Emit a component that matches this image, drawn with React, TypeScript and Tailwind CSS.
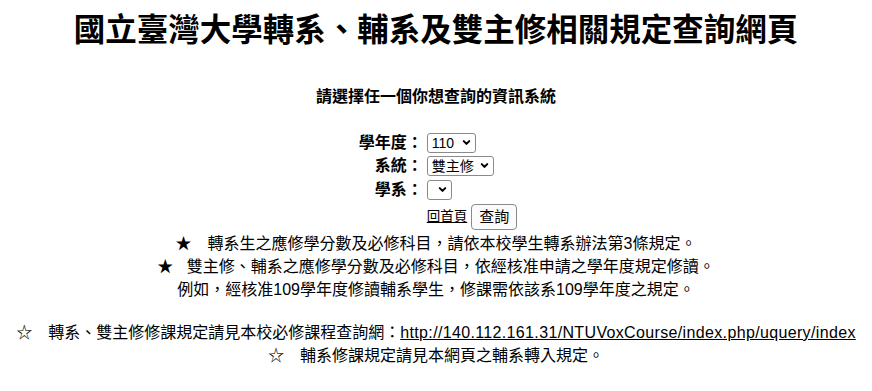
import { ChevronDown } from "lucide-react";

const body = "font-['Liberation_Sans','Noto_Sans_CJK_TC',sans-serif]";

function FakeSelect({ value, options }: { value: string; options: string[] }) {
  return (
    <span className="relative inline-flex align-middle">
      <select
        defaultValue={value}
        className="appearance-none h-[20px] rounded-[3px] border border-[#8a8a8a] bg-white pl-[4px] pr-[19px] text-[14px] leading-[18px] text-black outline-none"
      >
        {options.map((o) => (
          <option key={o} value={o}>
            {o}
          </option>
        ))}
      </select>
      <ChevronDown
        className="pointer-events-none absolute right-[4px] top-[4px] h-[11px] w-[11px] text-black"
        strokeWidth={4.5}
      />
    </span>
  );
}

export default function App() {
  return (
    <div className={`min-h-screen bg-white text-black ${body}`}>
      <div className="flex flex-col items-center">
        {/* Title */}
        <h1 className="pt-[5px] text-[31.5px] leading-[44px] font-semibold font-['Noto_Sans_CJK_TC',serif]">
          國立臺灣大學轉系、輔系及雙主修相關規定查詢網頁
        </h1>

        <p className="mt-[36px] text-[16px] leading-[23px] font-bold">請選擇任一個你想查詢的資訊系統</p>

        {/* Form */}
        <div className="mt-[24px] grid grid-cols-[auto_auto] gap-x-[4px] gap-y-[1px] ml-[4px]">
          <div className="h-[22px] flex items-center justify-end text-[16px] font-bold">學年度：</div>
          <div className="h-[22px] flex items-center">
            <FakeSelect value="110" options={["110", "109", "108"]} />
          </div>

          <div className="h-[22px] flex items-center justify-end text-[16px] font-bold">系統：</div>
          <div className="h-[22px] flex items-center">
            <FakeSelect value="雙主修" options={["雙主修", "輔系", "轉系"]} />
          </div>

          <div className="h-[23px] flex items-center justify-end text-[16px] font-bold">學系：</div>
          <div className="h-[23px] flex items-center">
            <FakeSelect value="" options={[""]} />
          </div>

          <div />
          <div className="h-[30px] flex items-center gap-[4px]">
            <a href="#" className="text-[13.5px] underline text-black">
              回首頁
            </a>
            <button className="h-[26px] rounded-[4px] border border-[#8a8a8a] bg-[#fbfbfb] px-[7px] text-[15px]">
              查詢
            </button>
          </div>
        </div>

        {/* Notes */}
        <div className="text-[16px] leading-[23px] text-center">
          <p>★　轉系生之應修學分數及必修科目，請依本校學生轉系辦法第3條規定。</p>
          <p>★&nbsp;&nbsp; 雙主修、輔系之應修學分數及必修科目，依經核准申請之學年度規定修讀。</p>
          <p>例如，經核准109學年度修讀輔系學生，修課需依該系109學年度之規定。</p>
          <p className="mt-[20px]">
            ☆　轉系、雙主修修課規定請見本校必修課程查詢網：
            <a
              href="http://140.112.161.31/NTUVoxCourse/index.php/uquery/index"
              className="underline text-black tracking-[0.35px]"
            >
              http://140.112.161.31/NTUVoxCourse/index.php/uquery/index
            </a>
          </p>
          <p>☆　輔系修課規定請見本網頁之輔系轉入規定。</p>
        </div>
      </div>
    </div>
  );
}
